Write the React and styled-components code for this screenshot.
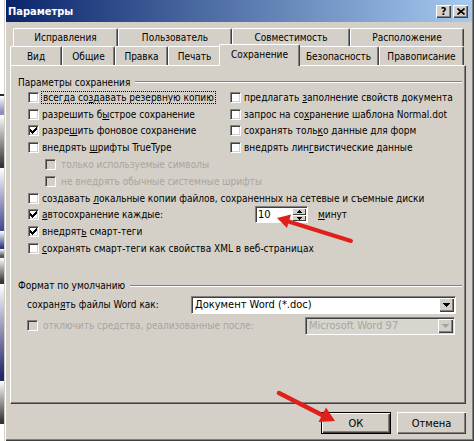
import styled, { createGlobalStyle, css } from 'styled-components';

const FACE = '#d4d0c8';
const SHADOW = '#808080';
const DARK = '#404040';
const RED = '#e0201c';

const GlobalStyle = createGlobalStyle`
  html, body {
    margin: 0;
    padding: 0;
    background: #fff;
  }
  body {
    font-family: "DejaVu Sans Condensed", "DejaVu Sans", sans-serif;
    font-size: 10px;
    color: #000;
  }
`;

const Screen = styled.div`
  position: relative;
  display: flex;
  width: 474px;
  height: 441px;
  overflow: hidden;
`;

// the window behind the dialog, only a sliver of it shows
const Backdrop = styled.div`
  flex: none;
  width: 4px;
  background: #fff linear-gradient(
    to bottom,
    transparent 94px, #2a2a2a 94px, #2a2a2a 96px,
    transparent 96px, #8a8fc0 112px, #8a8fc0 115px,
    transparent 115px, #333 166px, #333 168px,
    transparent 168px, #444a90 229px, #444a90 231px,
    transparent 231px, #33398a 247px, #33398a 249px,
    transparent 249px, #555 256px, #555 258px,
    transparent 258px, #333 282px, #333 284px,
    transparent 284px, #22266a 376px, #22266a 381px,
    transparent 381px, #333 422px, #333 424px,
    transparent 424px
  );
`;

const Dialog = styled.div`
  flex: 1;
  display: flex;
  flex-direction: column;
  padding: 0 2px 3px 2px;
  background: ${FACE};
  box-shadow: inset 1px 0 ${FACE}, inset 2px 0 #fff, inset -1px -1px ${DARK},
    inset -2px -2px ${SHADOW};
`;

const TitleBar = styled.div`
  display: flex;
  align-items: center;
  height: 22px;
  padding: 0 4px 0 2px;
  background: linear-gradient(to right, #0a246a, #a6caf0);
  color: #fff;
  font-weight: bold;
  font-size: 11px;
`;

const Title = styled.span`
  flex: 1;
`;

const CaptionButton = styled.div`
  width: 15px;
  height: 13px;
  margin-left: ${(p) => p.$gap || 0}px;
  display: flex;
  align-items: center;
  justify-content: center;
  background: ${FACE};
  color: #000;
  font-size: 11px;
  font-weight: bold;
  box-shadow: inset 1px 1px #fff, inset -1px -1px ${DARK}, inset -2px -2px ${SHADOW};
`;

const Body = styled.div`
  flex: 1;
  display: flex;
  flex-direction: column;
  padding: 6px 6px 0 4px;
`;

const TabRow = styled.div`
  display: flex;
  height: ${(p) => p.$h}px;
  margin-left: ${(p) => p.$indent || 0}px;
`;

const Tab = styled.div`
  position: relative;
  box-sizing: border-box;
  width: ${(p) => p.$w}px;
  display: flex;
  align-items: center;
  justify-content: center;
  background: ${FACE};
  border-top: 1px solid #fff;
  border-left: 1px solid #fff;
  border-right: 1px solid ${DARK};
  border-radius: 2px 2px 0 0;
  box-shadow: inset -1px 0 ${SHADOW};
  white-space: nowrap;

  ${(p) =>
    p.$active &&
    css`
      z-index: 1;
      width: ${p.$w + 4}px;
      margin: -2px -2px -1px;
      height: calc(100% + 3px);
      padding-bottom: 2px;
    `}
`;

const Panel = styled.div`
  box-sizing: border-box;
  height: 339px;
  padding: 9px 3px 0 7px;
  border-top: 1px solid #fff;
  border-left: 1px solid #fff;
  border-right: 1px solid ${DARK};
  border-bottom: 1px solid ${DARK};
  box-shadow: inset -1px -1px ${SHADOW};
`;

const SectionHeader = styled.div`
  display: flex;
  align-items: center;
  gap: 5px;
  height: 14px;
  margin-top: ${(p) => p.$top || 0}px;

  &::after {
    content: '';
    flex: 1;
    border-top: 1px solid ${SHADOW};
    border-bottom: 1px solid #fff;
  }
`;

const OptionGrid = styled.div`
  display: grid;
  grid-template-columns: 202px 1fr;
  grid-auto-rows: 16.8px;
  padding-left: 10px;
`;

const Option = styled.div`
  display: flex;
  align-items: center;
  gap: 3px;
  white-space: nowrap;
  grid-column: ${(p) => (p.$wide ? '1 / -1' : 'auto')};
  padding-left: ${(p) => (p.$indent ? 17 : 0)}px;
  color: ${(p) => (p.$disabled ? '#a8a59f' : '#000')};
`;

const Box = styled.span`
  flex: none;
  box-sizing: border-box;
  width: 11px;
  height: 11px;
  display: flex;
  align-items: center;
  justify-content: center;
  background: ${(p) => (p.$disabled ? FACE : '#fff')};
  border: 1px solid;
  border-color: ${SHADOW} #fff #fff ${SHADOW};
  box-shadow: inset 1px 1px ${DARK}, inset -1px -1px ${FACE};
`;

const Text = styled.span`
  display: inline-block;
  width: ${(p) => (p.$w ? `${p.$w}px` : 'auto')};
  margin-left: ${(p) => p.$gap || 0}px;
`;

const Focus = styled.span`
  outline: 1px dotted #000;
  outline-offset: 0;
  padding: 0 1px;
`;

const Spin = styled.div`
  box-sizing: border-box;
  display: flex;
  width: 53px;
  height: 17px;
  background: #fff;
  border: 1px solid;
  border-color: ${SHADOW} #fff #fff ${SHADOW};
  box-shadow: inset 1px 1px ${DARK};
`;

const SpinValue = styled.span`
  flex: 1;
  display: flex;
  align-items: center;
  padding-left: 2px;
  font-size: 11px;
`;

const SpinButtons = styled.div`
  box-sizing: border-box;
  display: flex;
  flex-direction: column;
  width: 15px;
  padding: 1px 1px 1px 0;
`;

const SpinButton = styled.div`
  flex: 1;
  display: flex;
  align-items: center;
  justify-content: center;
  background: ${FACE};
  box-shadow: inset 1px 1px #fff, inset -1px -1px ${DARK};
`;

const FieldRow = styled.div`
  display: flex;
  align-items: center;
  height: 18px;
  margin-top: 3px;
  padding-left: 9px;
  white-space: nowrap;
  color: ${(p) => (p.$disabled ? '#a8a59f' : '#000')};
`;

const Combo = styled.div`
  box-sizing: border-box;
  display: flex;
  width: ${(p) => p.$w}px;
  height: 18px;
  background: ${(p) => (p.$disabled ? '#d8d5cf' : '#fff')};
  color: ${(p) => (p.$disabled ? '#a8a59f' : '#000')};
  border: 1px solid;
  border-color: ${SHADOW} #fff #fff ${SHADOW};
  box-shadow: inset 1px 1px ${DARK};
  font-size: 11px;
`;

const ComboText = styled.span`
  flex: 1;
  display: flex;
  align-items: center;
  padding-left: 3px;
`;

const ComboButton = styled.div`
  width: 15px;
  margin: 1px 1px 1px 0;
  display: flex;
  align-items: center;
  justify-content: center;
  background: ${FACE};
  box-shadow: inset 1px 1px #fff, inset -1px -1px ${DARK}, inset -2px -2px ${SHADOW};
`;

const ButtonRow = styled.div`
  display: flex;
  justify-content: flex-end;
  gap: 6px;
  margin-top: 8px;
`;

const Button = styled.button`
  box-sizing: border-box;
  width: ${(p) => p.$w}px;
  height: 22px;
  padding: 0;
  font: inherit;
  font-size: 11px;
  color: #000;
  background: ${FACE};
  border: ${(p) => (p.$default ? '1px solid #000' : 'none')};
  box-shadow: inset 1px 1px #fff, inset -1px -1px ${DARK}, inset -2px -2px ${SHADOW};
`;

const Marks = styled.svg`
  position: absolute;
  inset: 0;
  pointer-events: none;
`;

const Check = () => (
  <svg width="7" height="7" viewBox="0 0 7 7" shapeRendering="crispEdges">
    <path d="M0 2h1v1h1v1h1V3h1V2h1V1h1V0h1v3H6v1H5v1H4v1H3v1H2V6H1V5H0z" fill="#000" />
  </svg>
);

const Arrow = ({ dir, color = '#000' }) => (
  <svg width="7" height="4" viewBox="0 0 7 4" shapeRendering="crispEdges">
    <path d={dir === 'up' ? 'M3.5 0L7 4H0z' : 'M0 0h7L3.5 4z'} fill={color} />
  </svg>
);

const SmallArrow = ({ dir }) => (
  <svg width="5" height="3" viewBox="0 0 5 3" shapeRendering="crispEdges">
    <path d={dir === 'up' ? 'M2.5 0L5 3H0z' : 'M0 0h5L2.5 3z'} fill="#000" />
  </svg>
);

const CheckBox = ({ checked, disabled }) => (
  <Box $disabled={disabled}>{checked && <Check />}</Box>
);

const topTabs = [
  ['Исправления', 105],
  ['Пользователь', 114],
  ['Совместимость', 118],
  ['Расположение', 114],
];

const bottomTabs = [
  ['Вид', 52],
  ['Общие', 53],
  ['Правка', 53],
  ['Печать', 53],
  ['Сохранение', 77, true],
  ['Безопасность', 81],
  ['Правописание', 85],
];

export default function App() {
  return (
    <>
      <GlobalStyle />
      <Screen>
        <Backdrop />
        <Dialog>
          <TitleBar>
            <Title>Параметры</Title>
            <CaptionButton>?</CaptionButton>
            <CaptionButton $gap={2}>
              <svg width="8" height="7" viewBox="0 0 8 7">
                <path d="M0.5 0.5l7 6M7.5 0.5l-7 6" stroke="#000" strokeWidth="1.6" />
              </svg>
            </CaptionButton>
          </TitleBar>

          <Body>
            <TabRow $h={18} $indent={3}>
              {topTabs.map(([label, w]) => (
                <Tab key={label} $w={w}>
                  {label}
                </Tab>
              ))}
            </TabRow>
            <TabRow $h={19}>
              {bottomTabs.map(([label, w, active]) => (
                <Tab key={label} $w={w} $active={active}>
                  {label}
                </Tab>
              ))}
            </TabRow>

            <Panel>
              <SectionHeader>Параметры сохранения</SectionHeader>
              <OptionGrid>
                <Option>
                  <CheckBox />
                  <Focus>
                    всегда со<u>з</u>давать резервную копию
                  </Focus>
                </Option>
                <Option>
                  <CheckBox />
                  <span>
                    предлагать <u>з</u>аполнение свойств документа
                  </span>
                </Option>
                <Option>
                  <CheckBox />
                  <span>
                    разрешить б<u>ы</u>строе сохранение
                  </span>
                </Option>
                <Option>
                  <CheckBox />
                  <span>
                    запрос на со<u>х</u>ранение шаблона Normal.dot
                  </span>
                </Option>
                <Option>
                  <CheckBox checked />
                  <span>
                    разре<u>ш</u>ить фоновое сохранение
                  </span>
                </Option>
                <Option>
                  <CheckBox />
                  <span>
                    сохранять толь<u>к</u>о данные для форм
                  </span>
                </Option>
                <Option>
                  <CheckBox />
                  <span>
                    внедрять <u>ш</u>рифты TrueType
                  </span>
                </Option>
                <Option>
                  <CheckBox />
                  <span>
                    внедрять лин<u>г</u>вистические данные
                  </span>
                </Option>
                <Option $wide $indent $disabled>
                  <CheckBox disabled />
                  <Text $gap={2}>только используемые символы</Text>
                </Option>
                <Option $wide $indent $disabled>
                  <CheckBox disabled />
                  <Text $gap={2}>не внедрять обычные системные шрифты</Text>
                </Option>
                <Option $wide>
                  <CheckBox />
                  <span>
                    создавать <u>л</u>окальные копии файлов, сохраненных на сетевые и съемные диски
                  </span>
                </Option>
                <Option $wide>
                  <CheckBox checked />
                  <Text $w={210}>
                    <u>а</u>втосохранение каждые:
                  </Text>
                  <Spin>
                    <SpinValue>10</SpinValue>
                    <SpinButtons>
                      <SpinButton>
                        <SmallArrow dir="up" />
                      </SpinButton>
                      <SpinButton>
                        <SmallArrow dir="down" />
                      </SpinButton>
                    </SpinButtons>
                  </Spin>
                  <Text $gap={7}>
                    <u>м</u>инут
                  </Text>
                </Option>
                <Option $wide>
                  <CheckBox checked />
                  <span>
                    внедрят<u>ь</u> смарт-теги
                  </span>
                </Option>
                <Option $wide>
                  <CheckBox />
                  <span>
                    <u>с</u>охранять смарт-теги как свойства XML в веб-страницах
                  </span>
                </Option>
              </OptionGrid>

              <SectionHeader $top={22}>Формат по умолчанию</SectionHeader>
              <FieldRow>
                <Text $w={164}>
                  сохран<u>я</u>ть файлы Word как:
                </Text>
                <Combo $w={265}>
                  <ComboText>Документ Word (*.doc)</ComboText>
                  <ComboButton>
                    <Arrow dir="down" />
                  </ComboButton>
                </Combo>
              </FieldRow>
              <FieldRow $disabled>
                <CheckBox disabled />
                <Text $w={262} $gap={5}>
                  отключить средства, реализованные после:
                </Text>
                <Combo $w={150} $disabled>
                  <ComboText>Microsoft Word 97</ComboText>
                  <ComboButton>
                    <Arrow dir="down" color="#a8a59f" />
                  </ComboButton>
                </Combo>
              </FieldRow>
            </Panel>

            <ButtonRow>
              <Button $w={70} $default>
                ОК
              </Button>
              <Button $w={69}>Отмена</Button>
            </ButtonRow>
          </Body>
        </Dialog>

        <Marks width="474" height="441" viewBox="0 0 474 441">
          <path d="M222 63.5 Q258 65.5 298 62.5" stroke={RED} strokeWidth="3" fill="none" strokeLinecap="round" />
          <line x1="351" y1="241" x2="287" y2="221" stroke={RED} strokeWidth="4" strokeLinecap="round" />
          <polygon points="277,218 291,214.5 287,228" fill={RED} />
          <line x1="279" y1="393" x2="324" y2="416" stroke={RED} strokeWidth="4.5" strokeLinecap="round" />
          <polygon points="335,421 318.5,422 326,407.5" fill={RED} />
        </Marks>
      </Screen>
    </>
  );
}
